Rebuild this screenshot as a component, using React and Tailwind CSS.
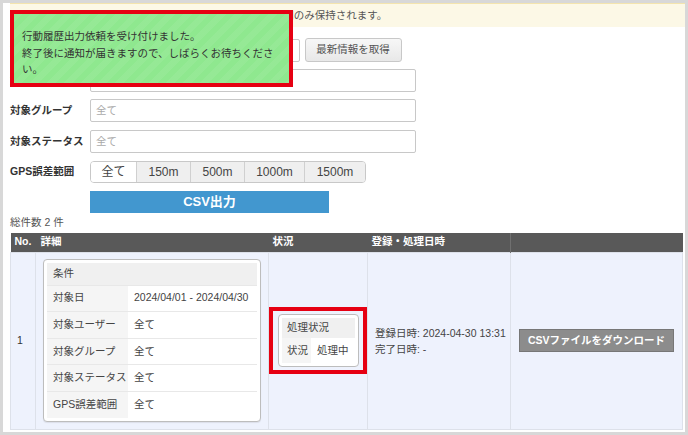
import React from "react";

const font = "font-['Liberation_Sans','Noto_Sans_CJK_JP',sans-serif]";

const conditions = [
  { label: "対象日", value: "2024/04/01 - 2024/04/30" },
  { label: "対象ユーザー", value: "全て" },
  { label: "対象グループ", value: "全て" },
  { label: "対象ステータス", value: "全て" },
  { label: "GPS誤差範囲", value: "全て" },
];

const ranges = [
  { label: "全て", w: "w-[45px]", active: true },
  { label: "150m", w: "w-[54px]" },
  { label: "500m", w: "w-[54px]" },
  { label: "1000m", w: "w-[60px]" },
  { label: "1500m", w: "w-[61px]" },
];

const FormRow = ({ label, className = "", children }) => (
  <div className={`flex items-center h-[23px] ${className}`}>
    <div className="w-[80px] shrink-0 font-bold text-[10.5px] text-[#333]">{label}</div>
    {children}
  </div>
);

const TextInput = ({ className = "w-[326px]", placeholder = "" }) => (
  <div
    className={`${className} h-[23px] border border-[#c8c8c8] rounded-[2px] bg-white flex items-center pl-[5px] text-[10.5px] text-[#aaa]`}
  >
    {placeholder}
  </div>
);

export default function App() {
  return (
    <div
      className={`${font} relative w-[688px] h-[435px] overflow-hidden bg-white border-[3px] border-[#d8d8d8] text-[#333]`}
    >
      <div className="pl-[7px]">
        {/* notice */}
        <div className="h-[24px] bg-[#fcf8e6] border-t border-[#f3e4ae] flex items-center pl-[41px] text-[10.5px] text-[#555]">
          出力履歴および出力ファイルは、登録日から30日間のみ保持されます。
        </div>

        {/* search form */}
        <div className="mt-[11px] flex flex-col">
          <div className="flex items-center h-[24px]">
            <div className="w-[80px] shrink-0 font-bold text-[10.5px]">対象日</div>
            <TextInput className="w-[95px]" />
            <span className="px-[4px] text-[10.5px]">〜</span>
            <TextInput className="w-[96px]" />
            <button className="ml-[5px] w-[97px] h-[24px] rounded-[3px] border border-[#c8c8c8] bg-[linear-gradient(#f7f7f7,#e8e8e8)] text-[10.5px] text-[#555]">
              最新情報を取得
            </button>
          </div>
          <FormRow label="対象ユーザー" className="mt-[7px]">
            <TextInput />
          </FormRow>
          <FormRow label="対象グループ" className="mt-[7px]">
            <TextInput placeholder="全て" />
          </FormRow>
          <FormRow label="対象ステータス" className="mt-[8px]">
            <TextInput placeholder="全て" />
          </FormRow>
          <div className="mt-[8px] flex items-center h-[22px]">
            <div className="w-[80px] shrink-0 font-bold text-[10.5px]">GPS誤差範囲</div>
            <div className="flex h-[22px] border border-[#c8c8c8] rounded-[4px] overflow-hidden">
              {ranges.map((r, i) => (
                <div
                  key={r.label}
                  className={`${r.w} flex items-center justify-center text-[12px] text-[#444] ${
                    r.active ? "bg-white" : "bg-[#efefef]"
                  } ${i > 0 ? "border-l border-[#d0d0d0]" : ""}`}
                >
                  {r.label}
                </div>
              ))}
            </div>
          </div>
          <div className="mt-[8px] flex pl-[80px]">
            <button className="w-[239px] h-[22px] bg-[#4297cf] text-white font-bold text-[13px]">
              CSV出力
            </button>
          </div>
        </div>

        <div className="mt-[3px] h-[14px] flex items-center text-[10.5px] text-[#555]">総件数 2 件</div>

        {/* results */}
        <table className="mt-[3px] w-[672px] table-fixed border-collapse text-[10.5px]">
          <colgroup>
            <col className="w-[25px]" />
            <col className="w-[233px]" />
            <col className="w-[99px]" />
            <col className="w-[143px]" />
            <col className="w-[172px]" />
          </colgroup>
          <thead>
            <tr className="h-[19px] bg-[#595959] text-white font-bold text-left">
              <th className="pl-[4px] font-bold">No.</th>
              <th className="pl-[5px] font-bold">詳細</th>
              <th className="pl-[4px] font-bold">状況</th>
              <th className="pl-[4px] font-bold border-r border-[#707070]">登録・処理日時</th>
              <th></th>
            </tr>
          </thead>
          <tbody>
            <tr className="bg-[#eef2fd] h-[177px]">
              <td className="pl-[6px] align-middle border border-[#dde1ea]">1</td>
              <td className="align-middle border border-[#dde1ea] pl-[7px]">
                <div className="w-[218px] rounded-[4px] border border-[#bdbdbd] bg-white p-[3px] shadow-[0_1px_1px_rgba(0,0,0,0.08)]">
                  <table className="w-full border-collapse text-[10.5px] text-[#444]">
                    <tbody>
                      <tr className="h-[22px] bg-[#f0f0f0]">
                        <td colSpan={2} className="pl-[6px]">条件</td>
                      </tr>
                      {conditions.map((c) => (
                        <tr key={c.label} className="h-[26.6px] border-t border-[#e8e8e8]">
                          <td className="w-[81px] pl-[6px] bg-[#f5f5f5] whitespace-nowrap">{c.label}</td>
                          <td className="pl-[6px] bg-white whitespace-nowrap">{c.value}</td>
                        </tr>
                      ))}
                    </tbody>
                  </table>
                </div>
              </td>
              <td className="align-middle border border-[#dde1ea]">
                <div className="border-[4px] border-[#e60012] pl-[5px] pr-[4px] py-[3px]">
                  <div className="rounded-[4px] border border-[#bdbdbd] bg-white p-[3px]">
                    <table className="w-full border-collapse text-[10.5px] text-[#444]">
                      <tbody>
                        <tr className="h-[20px] bg-[#f0f0f0]">
                          <td colSpan={2} className="pl-[5px]">処理状況</td>
                        </tr>
                        <tr className="h-[25px]">
                          <td className="w-[29px] pl-[5px] bg-[#f5f5f5] whitespace-nowrap">状況</td>
                          <td className="pl-[6px] bg-white whitespace-nowrap">処理中</td>
                        </tr>
                      </tbody>
                    </table>
                  </div>
                </div>
              </td>
              <td className="align-middle border border-[#dde1ea] pl-[7px] leading-[16px] text-[#444]">
                <div>登録日時: 2024-04-30 13:31</div>
                <div>完了日時: -</div>
              </td>
              <td className="align-middle border border-[#dde1ea] pl-[8px]">
                <button className="w-[155px] h-[23px] bg-[#8c8c8c] border border-[#777] text-white font-bold text-[10.5px]">
                  CSVファイルをダウンロード
                </button>
              </td>
            </tr>
          </tbody>
        </table>
      </div>

      {/* toast */}
      <div className="absolute left-[7px] top-[7px] w-[283px] h-[77px] border-[4px] border-[#e60012] bg-[#8fe88f] bg-[repeating-linear-gradient(135deg,rgba(255,255,255,0.06)_0px,rgba(255,255,255,0.06)_6px,transparent_6px,transparent_12px)] pl-[8px] pr-[9px] pt-[14px] text-[10.5px] leading-[16.5px] text-[#333]">
        <div>行動履歴出力依頼を受け付けました。</div>
        <div>終了後に通知が届きますので、しばらくお待ちください。</div>
      </div>
    </div>
  );
}
